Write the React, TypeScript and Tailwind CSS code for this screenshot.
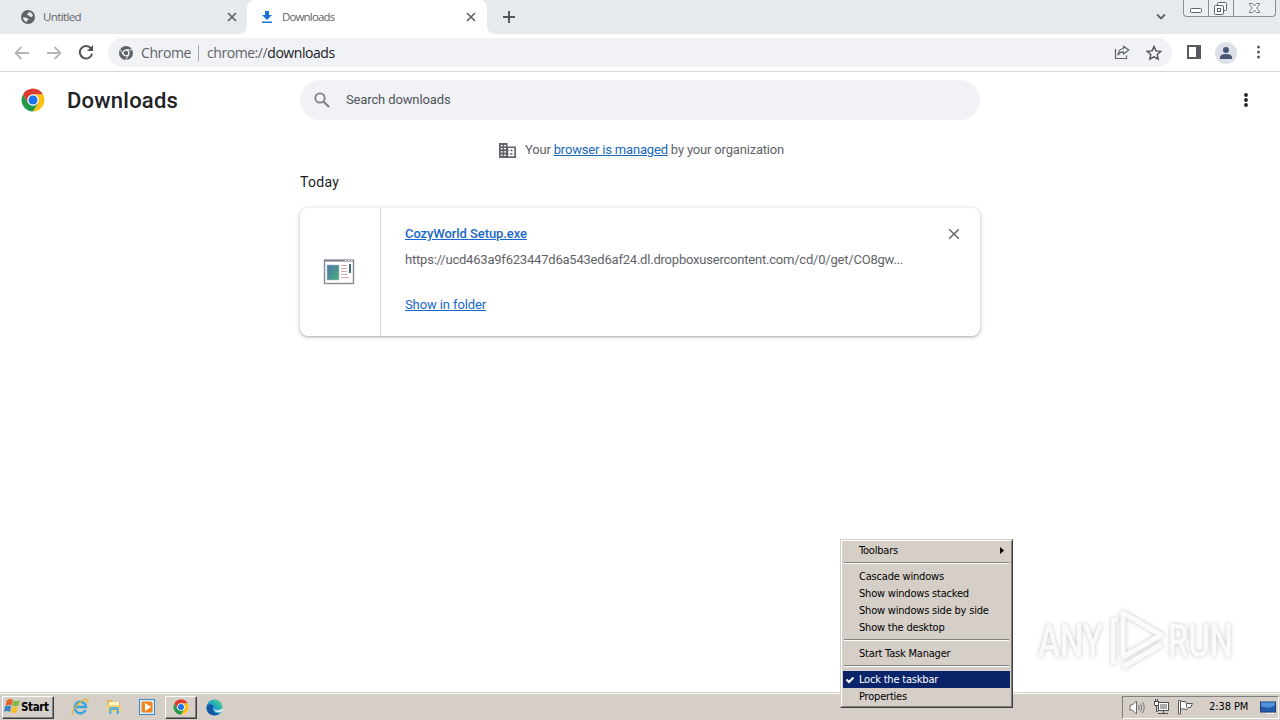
import React from "react";

const ROBOTO = "font-['Roboto','Liberation_Sans',sans-serif]";
const TAHOMA = "font-['DejaVu_Sans_Condensed','DejaVu_Sans',sans-serif]";
const SEGOE = "font-['Open_Sans','Noto_Sans',sans-serif]";

function ChromeLogo({ size }: { size: number }) {
  return (
    <svg width={size} height={size} viewBox="0 0 48 48" className="shrink-0">
      <circle cx="24" cy="24" r="23" fill="#fff" />
      <path d="M43.9 12.5 H24 V24 L34 29.5 L24 47 A23 23 0 0 0 43.9 12.5z" fill="#fbc116" />
      <path d="M4.1 12.5 L14 29.8 L24 35.5 L34 29.8 L24 47 A23 23 0 0 1 4.1 12.5z" fill="#23994a" />
      <path d="M4.1 12.5 A23 23 0 0 1 43.9 12.5 H24 L14 29.8z" fill="#dc3b2f" />
      <circle cx="24" cy="24" r="11.5" fill="#fff" />
      <circle cx="24" cy="24" r="9" fill="#1a73e8" />
    </svg>
  );
}

function Close({ size, color = "#5f6368", width = 2 }: { size: number; color?: string; width?: number }) {
  return (
    <svg width={size} height={size} viewBox="0 0 10 10" className="shrink-0">
      <path d="M1 1 L9 9 M9 1 L1 9" stroke={color} strokeWidth={width} fill="none" />
    </svg>
  );
}

function TabStrip() {
  return (
    <div className={`flex h-[34px] bg-[#e7eaed] text-[12px] text-[#5f6368] ${SEGOE}`}>
      <div className="flex w-[247px] items-center pl-[21px] pr-[10px]">
        <svg width="14" height="14" viewBox="0 0 14 14">
          <circle cx="7" cy="7" r="7" fill="#5f6368" />
          <path d="M2 7.2 Q5 7 6 8.2 Q7.8 8.4 7.6 10 L6 10.5 L6 12.1 Q2.3 11.2 2 7.2z M7.6 2 Q11 2.2 12 5.8 L10.6 7 L8.5 6.6 L7.8 5.2 L6 5.2 L6.3 3.6 L7.7 3.4z" fill="#e7eaed" />
        </svg>
        <span className="ml-[8px] text-[11.5px] tracking-[-0.62px]">Untitled</span>
        <span className="ml-auto"><Close size={10} width={1.7} /></span>
      </div>
      <div className="relative flex w-[240px] items-center rounded-t-[8px] bg-white pl-[14px] pr-[11px]">
        <svg className="absolute bottom-0 -left-[8px]" width="8" height="8"><path d="M8 0 V8 H0 A8 8 0 0 0 8 0z" fill="#fff" /></svg>
        <svg className="absolute bottom-0 -right-[8px]" width="8" height="8"><path d="M0 0 V8 H8 A8 8 0 0 1 0 0z" fill="#fff" /></svg>
        <svg width="12" height="14" viewBox="0 0 12 14">
          <path d="M4 1 H8 V5 H11 L6 10 L1 5 H4z M1 11.5 H11 V13 H1z" fill="#1a73d8" />
        </svg>
        <span className="ml-[9px] text-[11.5px] tracking-[-0.85px]">Downloads</span>
        <span className="ml-auto"><Close size={10} width={1.7} /></span>
      </div>
      <div className="flex w-[43px] items-center justify-center">
        <svg width="12" height="12"><path d="M6 0 V12 M0 6 H12" stroke="#50545a" strokeWidth="1.9" /></svg>
      </div>
      <div className="ml-auto flex">
        <svg className="mr-[17px] mt-[13px]" width="10" height="8" viewBox="0 0 10 8"><path d="M1 1.5 L5 5.5 L9 1.5" fill="none" stroke="#5f6368" strokeWidth="1.8" /></svg>
        <div className="mr-[4px] flex h-[17px] w-[93px] rounded-b-[4px] border border-t-0 border-[#8a8e95] bg-[#eceff1]">
          <div className="w-[25px] border-r border-[#8a8e95]">
            <svg width="25" height="16"><rect x="6.5" y="8.5" width="11" height="4" rx="1" fill="#fff" stroke="#5c636e" /></svg>
          </div>
          <div className="w-[25px] border-r border-[#8a8e95]">
            <svg width="25" height="16" fill="#fff" stroke="#5c636e"><rect x="8.5" y="2.5" width="9" height="8" rx="1" /><rect x="5.5" y="5.5" width="9" height="9" rx="1" /><rect x="8.5" y="8.5" width="3" height="3" /></svg>
          </div>
          <svg width="41" height="16"><path d="M15.5 3.5 h3 l2 2.5 2-2.5 h3 v1.2 l-3 3.3 3 3.3 v1.2 h-3 l-2-2.5-2 2.5 h-3 v-1.2 l3-3.3-3-3.3z" fill="#fff" stroke="#5c636e" strokeWidth=".9" /></svg>
        </div>
      </div>
    </div>
  );
}

function Toolbar() {
  return (
    <div className="flex h-[38px] items-center border-b border-[#d5d7da] bg-white pl-[14px]">
      <svg width="16" height="14" viewBox="0 0 16 14"><path d="M15 7 H2 M7.5 1 L1.5 7 L7.5 13" fill="none" stroke="#b4b6b9" strokeWidth="1.8" /></svg>
      <svg className="ml-[16px]" width="16" height="14" viewBox="0 0 16 14"><path d="M1 7 H14 M8.5 1 L14.5 7 L8.5 13" fill="none" stroke="#b4b6b9" strokeWidth="1.8" /></svg>
      <svg className="-mt-[2px] ml-[16px]" width="16" height="16" viewBox="0 0 16 16">
        <path d="M13 4.5 A6.2 6.2 0 1 0 14.1 9.6" fill="none" stroke="#50545a" strokeWidth="2" />
        <path d="M15 1 V7 H9z" fill="#50545a" />
      </svg>
      <div className={`ml-[14px] flex h-[29px] w-[1064px] items-center rounded-full bg-[#f0f2f5] pl-[11px] pr-[10px] text-[#5f6368] ${SEGOE}`}>
        <svg width="14" height="14" viewBox="0 0 14 14">
          <circle cx="7" cy="7" r="7" fill="#5f6368" />
          <circle cx="7" cy="7" r="2.9" fill="#5f6368" stroke="#f0f2f5" strokeWidth="1.4" />
          <path d="M7 3.8 H13.3 M4.2 8.6 L1 3.2 M9.8 8.6 L6.8 14" stroke="#f0f2f5" strokeWidth="1" />
        </svg>
        <span className="ml-[8px] w-[50px] whitespace-nowrap text-[14px] tracking-[-0.4px]">Chrome</span>
        <span className="ml-[7px] mr-[8px] h-[16px] w-px bg-[#a5a8ac]" />
        <span className="text-[14px] tracking-[-0.44px]">chrome://<span className="text-[#202124]">downloads</span></span>
        <svg className="ml-auto" width="16" height="15" viewBox="0 0 16 15" fill="none" stroke="#5f6368" strokeWidth="1.2">
          <path d="M1.5 4 V13.5 H12.5 V10.5" />
          <path d="M9.5 1.2 L14.8 5 L9.5 9 V6.8 Q6 6.7 4 10 Q4.4 4 9.5 3.5z" strokeLinejoin="round" />
        </svg>
        <svg className="ml-[16px]" width="16" height="16" viewBox="0 0 16 16"><path d="M8 1.5 L10 5.9 L14.7 6.4 L11.2 9.5 L12.2 14.2 L8 11.8 L3.8 14.2 L4.8 9.5 L1.3 6.4 L6 5.9z" fill="none" stroke="#50545a" strokeWidth="1.4" /></svg>
      </div>
      <svg className="-mt-[2px] ml-[15px]" width="14" height="14"><path d="M0 0 H14 V14 H0z M2 2 V12 H9 V2z" fillRule="evenodd" fill="#56595e" /></svg>
      <svg className="ml-[14px]" width="22" height="22"><circle cx="11" cy="11" r="11" fill="#dde1e7" /><circle cx="11" cy="8" r="3" fill="#4a5675" /><path d="M5 17 V15 Q5.5 12 11 12 Q16.5 12 17 15 V17z" fill="#4a5675" /></svg>
      <svg className="-mt-[1px] ml-[19px]" width="5" height="14" fill="#56595e"><circle cx="2.5" cy="2" r="1.5" /><circle cx="2.5" cy="7" r="1.5" /><circle cx="2.5" cy="12" r="1.5" /></svg>
    </div>
  );
}

function PageHeader() {
  return (
    <div className="flex h-[56px] items-center pl-[21px] pr-[31px]">
      <ChromeLogo size={24} />
      <h1 className="ml-[22px] w-[233px] text-[22px] font-medium tracking-[0.22px] text-[#202124]">Downloads</h1>
      <div className="flex h-[40px] w-[680px] items-center rounded-full bg-[#f0f2f5] pl-[14px]">
        <svg width="16" height="16" viewBox="0 0 16 16" fill="none" stroke="#7d8185"><circle cx="6" cy="6" r="4.7" strokeWidth="1.8" /><path d="M9.5 9.5 L15 15" strokeWidth="2.1" /></svg>
        <span className="ml-[16px] text-[13px] tracking-[-0.13px] text-[#50545a]">Search downloads</span>
      </div>
      <svg className="ml-auto" width="6" height="14" fill="#202124"><circle cx="3" cy="2" r="1.9" /><circle cx="3" cy="7" r="1.9" /><circle cx="3" cy="12" r="1.9" /></svg>
    </div>
  );
}

function DownloadList() {
  return (
    <main className="ml-[300px] w-[680px]">
      <div className="flex h-[44px] items-center pl-[199px] text-[13px] text-[#5f6368]">
        <svg width="17" height="15" viewBox="0 0 17 15">
          <path d="M0 0 H8.5 V3.5 H17 V15 H0z" fill="#5f6368" />
          <path d="M1.7 2 h2 v1.2h-2z M5 2 h2v1.2h-2z M1.7 5 h2v1.2h-2z M5 5h2v1.2h-2z M1.7 8.2h2v1.2h-2z M5 8.2h2v1.2h-2z M1.7 11.5h2v1.2h-2z M5 11.5h2v1.2h-2z M9 5 H15.3 V13.3 H9z" fill="#fff" />
          <path d="M11.5 6.5h2v1.8h-2z M11.5 10h2v1.8h-2z M8.5 6.5h1.2v1.8h-1.2z M8.5 10h1.2v1.8h-1.2z" fill="#5f6368" />
        </svg>
        <span className="ml-[9px] whitespace-nowrap tracking-[-0.18px]">Your <a className="text-[#1967b8] underline">browser is managed</a> by your organization</span>
      </div>
      <h2 className="h-[36px] text-[14px] leading-[21px] tracking-[0.3px] text-[#202124]">Today</h2>
      <div className="flex h-[128px] rounded-[8px] bg-white shadow-[0_1px_2px_rgba(60,64,67,.3),0_1px_4px_1px_rgba(60,64,67,.16)]">
        <div className="flex w-[81px] items-center justify-center border-r border-[#d8dadd] pr-[2px]">
          <svg width="32" height="26" viewBox="0 0 32 26">
            <defs><linearGradient id="thumb" x1="0" y1="0" x2="1" y2="1"><stop offset="0" stopColor="#4976a8" /><stop offset="1" stopColor="#48ad7c" /></linearGradient></defs>
            <rect x="1.5" y="1.5" width="29" height="23" fill="#fff" stroke="#858b93" strokeWidth="1.4" />
            <path d="M1 1.5 H31" stroke="#7b828d" strokeWidth="2" /><path d="M22 1.5h1.5 m1.5 0h1.5 m1.5 0h1.5" stroke="#fff" />
            <rect x="4" y="6" width="12" height="15" fill="url(#thumb)" stroke="#b5c1c8" strokeWidth=".6" />
            <path d="M18 6.500h6 M18 9.500h6 M18 12.500h6 M18 15.500h6 M18 18.500h8" stroke="#d3a8a8" />
            <rect x="26" y="5" width="2" height="9" fill="#396b88" />
          </svg>
        </div>
        <div className="flex-1 pl-[24px] pt-[16px] text-[13px]">
          <div className="flex items-center pr-[20px] leading-[20px]">
            <a className="font-medium tracking-[-0.08px] text-[#1967c8] underline">CozyWorld Setup.exe</a>
            <span className="ml-auto"><Close size={12} width={1.2} /></span>
          </div>
          <div className="mt-[6px] whitespace-nowrap leading-[20px] tracking-[-0.21px] text-[#5f6368]">https://ucd463a9f623447d6a543ed6af24.dl.dropboxusercontent.com/cd/0/get/CO8gw...</div>
          <a className="mt-[25px] block leading-[20px] tracking-[-0.1px] text-[#1967c8] underline">Show in folder</a>
        </div>
      </div>
    </main>
  );
}

function Separator() {
  return <div className="mx-[1px] mb-[4px] mt-[3px] h-[2px] border-t border-[#808080] bg-white" />;
}

function MenuItem({ label, active = false, arrow = false }: { label: string; active?: boolean; arrow?: boolean }) {
  return (
    <div className={`flex h-[17px] items-center text-[11px] ${active ? "bg-[#0a246a] text-white" : "text-black"}`}>
      <span className="w-[16px] pl-[3px]">
        {active && <svg width="8" height="8"><path d="M0.5 3.5 L3 6 L7.5 1.5" fill="none" stroke="#fff" strokeWidth="2" /></svg>}
      </span>
      <span className="whitespace-nowrap pt-[1px] tracking-[-0.2px]">{label}</span>
      {arrow && <svg className="ml-auto mr-[6px]" width="4" height="7"><path d="M0 0 L4 3.5 L0 7z" fill="#000" /></svg>}
    </div>
  );
}

function ContextMenu() {
  return (
    <div className={`absolute left-[840px] top-[539px] h-[169px] w-[173px] border border-b-[#404040] border-l-[#d4d0c8] border-r-[#404040] border-t-[#d4d0c8] bg-[#d5cfc8] ${TAHOMA}`}>
      <div className="h-full border border-b-[#808080] border-l-white border-r-[#808080] border-t-white px-[1px] pt-[1px]">
        <MenuItem label="Toolbars" arrow />
        <Separator />
        <MenuItem label="Cascade windows" />
        <MenuItem label="Show windows stacked" />
        <MenuItem label="Show windows side by side" />
        <MenuItem label="Show the desktop" />
        <Separator />
        <MenuItem label="Start Task Manager" />
        <Separator />
        <MenuItem label="Lock the taskbar" active />
        <MenuItem label="Properties" />
      </div>
    </div>
  );
}

function Watermark() {
  return (
    <svg className="absolute left-[1030px] top-[600px] overflow-visible drop-shadow-[0_0_2px_rgba(0,0,0,.22)]" width="230" height="80" viewBox="0 0 230 80">
      <g className="font-['Roboto',sans-serif] font-medium" fontSize="46" fill="#fafafa">
        <text x="8" y="57" textLength="65" lengthAdjust="spacingAndGlyphs">ANY</text>
        <text x="138" y="57" textLength="65" lengthAdjust="spacingAndGlyphs">RUN</text>
      </g>
      <g fill="none" stroke="#fafafa" strokeLinejoin="round">
        <path d="M88 19 L83 20 V62 L87 61" strokeWidth="4" />
        <path d="M93 57 V13 L131 35 L93 57" strokeWidth="5" />
        <path d="M93 67 L132 44" strokeWidth="5.5" />
      </g>
    </svg>
  );
}

function Taskbar() {
  return (
    <footer className={`flex h-[28px] items-center border-t border-[#d4d0c8] bg-[#d5cfc8] pl-[2px] pr-[1px] shadow-[inset_0_1px_0_#fff] ${TAHOMA}`}>
      <div className="mt-[1px] flex h-[23px] w-[52px] items-center border border-b-[#404040] border-l-white border-r-[#404040] border-t-white pl-[1px] shadow-[inset_-1px_-1px_0_#808080]">
        <svg className="-mt-[2px] shrink-0" width="17" height="16" viewBox="0 0 17 16">
          <path d="M3 2 Q6 0 9 2 L7.5 7.5 Q5 6 1.5 7.5z" fill="#e96027" />
          <path d="M9.7 2.5 Q13 4 16 2 L14.5 7.5 Q11.5 9 8.2 7.8z" fill="#80b93e" />
          <path d="M1 8.2 Q4 7 7.2 8.2 L6 14 Q3 12 0 14z" fill="#3b82c9" />
          <path d="M8 8.7 Q11 10 14.200 8.500 L12.5 14 Q10 16 6.700 14.500z" fill="#f7bd27" />
        </svg>
        <span className="pt-[1px] text-[11.5px] font-bold tracking-[-0.35px] text-black">Start</span>
      </div>
      <svg className="ml-[17px]" width="18" height="18" viewBox="0 0 18 18" fill="none">
        <path d="M14.5 12 A5.7 5.7 0 1 1 15 9 H5" stroke="#38a5dc" strokeWidth="2.5" />
        <path d="M2 16.5 C-1 14 8 3 14.5 1.5 Q18 1 16.5 5" stroke="#e6b536" strokeWidth="1.3" />
      </svg>
      <svg className="ml-[17px] mt-[1px]" width="16" height="16" viewBox="0 0 16 16">
        <path d="M1 1 H6 L7 3 H14 V12 H1z" fill="#e0ba54" /><path d="M3 3 H13 V6 H3z" fill="#fff5c9" /><path d="M1 6 H15 V13 H1z" fill="#f0d474" /><path d="M3 15 V10 Q3 8 5 8 H11 Q13 8 13 10 V15 H10.5 V11 H5.5 V15z" fill="#62b0d8" />
      </svg>
      <svg className="ml-[17px]" width="16" height="16" viewBox="0 0 16 16">
        <rect x=".5" y=".5" width="15" height="15" fill="#d9eaf5" stroke="#4289be" /><rect x="2.5" y="2.5" width="11" height="11" rx="2" fill="#f08522" /><path d="M6 4 L12 8 L6 12z" fill="#fff" />
      </svg>
      <div className="ml-[10px] mt-[1px] flex h-[23px] w-[32px] items-center justify-center border border-b-[#404040] border-l-white border-r-[#404040] border-t-white shadow-[inset_-1px_-1px_0_#808080]">
        <ChromeLogo size={16} />
      </div>
      <svg className="ml-[9px] mt-[1px]" width="17" height="17" viewBox="0 0 17 17">
        <defs><linearGradient id="edge" x1="0" y1="1" x2="1" y2="0"><stop offset="0" stopColor="#1266b8" /><stop offset=".5" stopColor="#1ca5cf" /><stop offset="1" stopColor="#59d66a" /></linearGradient></defs>
        <circle cx="8.5" cy="8.5" r="8" fill="url(#edge)" /><path d="M1 6 Q5 4 8 7 Q5.5 12 9 14 Q12 15.5 14.5 14 Q11 17 7 16.2 Q1 15 .5 9z" fill="#1458a5" /><path d="M8.5 7 Q7 10 9.5 11 Q13 12 17 9 L15.8 12.5 Q10 15 8 11 Q7 9 8.5 7z" fill="#d5eef2" />
      </svg>
      <div className="ml-auto mt-[1px] flex h-[23px] w-[157px] items-center border border-b-white border-l-[#808080] border-r-white border-t-[#808080] pl-[6px]">
        <svg width="17" height="15" viewBox="0 0 17 15" fill="none" stroke="#6b6b6b"><path d="M1 5 H3.5 L7.5 1 V14 L3.5 10 H1z" fill="#fff" /><path d="M9.5 5 Q11 7.5 9.5 10 M11.5 3.5 Q14 7.5 11.5 11.5 M13.5 2 Q17 7.5 13.5 13" strokeWidth=".9" /></svg>
        <svg className="ml-[7px]" width="17" height="16" viewBox="0 0 17 16" fill="#fff" stroke="#4f4f4f"><rect x="5.5" y="3.5" width="10" height="8" /><rect x="7" y="5" width="7" height="5" fill="#aaa" stroke="none" /><path d="M1 2h5v4H1z" stroke="none" /><path d="M1.5 2 V6.5 H5.5 V2 M1 2.5 H6 M2.5 0 V2 M4.5 0 V2 M3.5 6.5 V12.5 H5" fill="none" /><path d="M5 14.5h10 M10.5 12v2" /></svg>
        <svg className="ml-[7px]" width="17" height="16" viewBox="0 0 17 16" fill="#fff" stroke="#595959"><path d="M1.5 1.5 V15 H3.5 V10 H8 L9.5 11 L11 8.5 H13.5 L15.5 4.5 H9.5 L8.5 2.5 H3.5 V1.5z" /><path d="M3.5 3V10 M9.5 4.5V8.5" fill="none" /></svg>
        <span className="ml-[15px] whitespace-nowrap pt-[1px] text-[11px] tracking-[-0.08px] text-black">2:38 PM</span>
        <svg className="ml-auto mr-[2px] mt-[1px]" width="16" height="14" viewBox="0 0 16 14"><rect x=".5" y="1" width="15" height="10" fill="#245cad" stroke="#203d72" /><path d="M1 1.5H15 V4 Q8 9 1 5z" fill="#4f91dc" /><path d="M6 12.5H14" stroke="#f4f4f4" /></svg>
      </div>
    </footer>
  );
}

export default function App() {
  return (
    <div className={`relative flex h-[720px] w-[1280px] flex-col overflow-hidden bg-white ${ROBOTO}`}>
      <TabStrip />
      <Toolbar />
      <div className="flex-1">
        <PageHeader />
        <DownloadList />
      </div>
      <Taskbar />
      <Watermark />
      <ContextMenu />
    </div>
  );
}
